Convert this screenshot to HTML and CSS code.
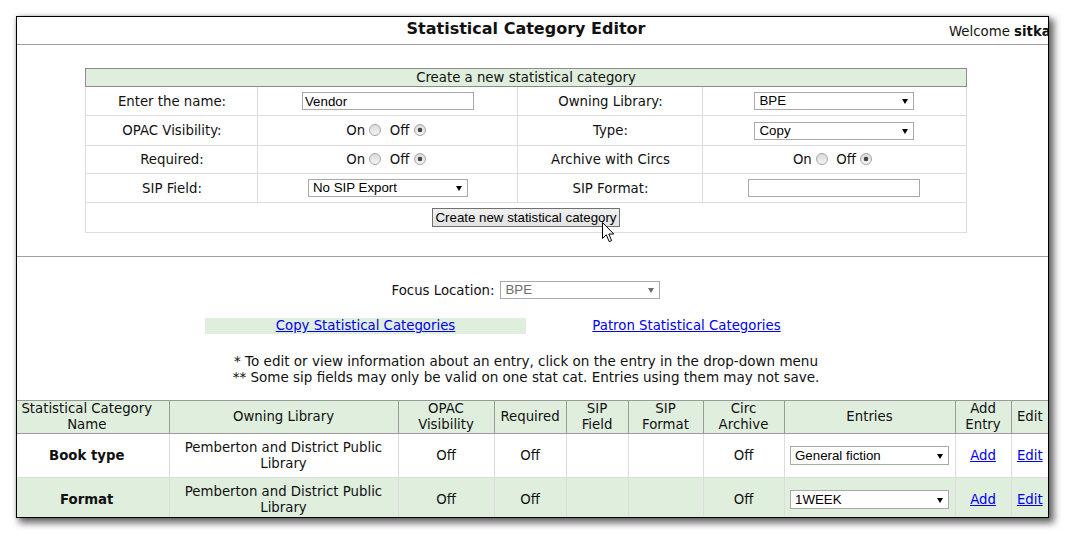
FILE: index.html
```html
<!DOCTYPE html>
<html lang="en">
<head>
    <meta charset="UTF-8">
    <meta name="viewport" content="width=device-width, initial-scale=1.0">
    <title>Statistical Category Editor</title>
    <link rel="stylesheet" href="styles.css">
</head>
<body>
    <div class="window">
        <div class="header">
            <span class="title">Statistical Category Editor</span>
            <span class="welcome">Welcome <b>sitka</b></span>
        </div>

        <div class="create">
            <table class="create-table">
                <colgroup>
                    <col style="width: 172px">
                    <col style="width: 260px">
                    <col style="width: 185px">
                    <col style="width: 263px">
                </colgroup>
                <tr>
                    <th colspan="4">Create a new statistical category</th>
                </tr>
                <tr>
                    <td>Enter the name:</td>
                    <td><input type="text" class="text" value="Vendor"></td>
                    <td>Owning Library:</td>
                    <td><span class="select-wrap"><select class="select"><option>BPE</option></select></span></td>
                </tr>
                <tr class="tall">
                    <td>OPAC Visibility:</td>
                    <td>On <input type="radio" class="radio" name="opac"> Off <input type="radio" class="radio" name="opac" checked></td>
                    <td>Type:</td>
                    <td><span class="select-wrap"><select class="select"><option>Copy</option></select></span></td>
                </tr>
                <tr class="short">
                    <td>Required:</td>
                    <td>On <input type="radio" class="radio" name="req"> Off <input type="radio" class="radio" name="req" checked></td>
                    <td>Archive with Circs</td>
                    <td>On <input type="radio" class="radio" name="arch"> Off <input type="radio" class="radio" name="arch" checked></td>
                </tr>
                <tr>
                    <td>SIP Field:</td>
                    <td><span class="select-wrap"><select class="select"><option>No SIP Export</option></select></span></td>
                    <td>SIP Format:</td>
                    <td><input type="text" class="text" value=""></td>
                </tr>
                <tr>
                    <td colspan="4" class="button-row">
                        <span class="btn-wrap">
                            <button class="btn">Create new statistical category</button>
                            <svg class="cursor" width="13" height="21" viewBox="0 0 13 21">
                                <path d="M0.5 0.5 V16.5 L4.3 12.8 L7.2 19.6 L9.6 18.6 L6.8 12 H11.8 Z" fill="#fff" stroke="#000" stroke-width="1" stroke-linejoin="miter"/>
                            </svg>
                        </span>
                    </td>
                </tr>
            </table>
        </div>

        <div class="browse">
            <div class="focus">
                <span>Focus Location:</span>
                <span class="select-wrap dim"><select class="select" disabled><option>BPE</option></select></span>
            </div>
            <div class="links">
                <div class="link-cell current"><a href="#">Copy Statistical Categories</a></div>
                <div class="link-cell"><a href="#">Patron Statistical Categories</a></div>
            </div>
            <p class="notes">
                * To edit or view information about an entry, click on the entry in the drop-down menu<br>
                ** Some sip fields may only be valid on one stat cat. Entries using them may not save.
            </p>
        </div>

        <table class="cats">
            <colgroup>
                <col style="width: 152px">
                <col style="width: 229px">
                <col style="width: 96px">
                <col style="width: 72px">
                <col style="width: 62px">
                <col style="width: 75px">
                <col style="width: 81px">
                <col style="width: 171px">
                <col style="width: 56px">
                <col style="width: 37px">
            </colgroup>
            <tr>
                <th>Statistical Category Name</th>
                <th>Owning Library</th>
                <th>OPAC Visibility</th>
                <th>Required</th>
                <th>SIP<br>Field</th>
                <th>SIP Format</th>
                <th>Circ Archive</th>
                <th>Entries</th>
                <th>Add Entry</th>
                <th>Edit</th>
            </tr>
            <tr>
                <td class="name">Book type</td>
                <td>Pemberton and District Public Library</td>
                <td>Off</td>
                <td>Off</td>
                <td></td>
                <td></td>
                <td>Off</td>
                <td><span class="select-wrap"><select class="select entry"><option>General fiction</option></select></span></td>
                <td><a href="#">Add</a></td>
                <td><a href="#">Edit</a></td>
            </tr>
            <tr class="alt">
                <td class="name">Format</td>
                <td>Pemberton and District Public Library</td>
                <td>Off</td>
                <td>Off</td>
                <td></td>
                <td></td>
                <td>Off</td>
                <td><span class="select-wrap"><select class="select entry"><option>1WEEK</option></select></span></td>
                <td><a href="#">Add</a></td>
                <td><a href="#">Edit</a></td>
            </tr>
        </table>
    </div>
</body>
</html>
```

FILE: styles.css
```css
body {
    margin: 0;
    padding: 16px 0 14px 16px;
    background: #fff;
    font-family: "DejaVu Sans", Verdana, sans-serif;
    font-size: 13.3px;
    color: #111;
}
.window {
    width: 1031px;
    height: 500px;
    border: 1px solid #000;
    overflow: hidden;
    background: #fff;
    box-shadow: 4px 4px 7px 1px rgba(0,0,0,0.6), 0 0 3px rgba(0,0,0,0.2);
}
.header {
    display: flex;
    align-items: flex-start;
    height: 27px;
    border-bottom: 1px solid #a0a0a0;
    white-space: nowrap;
}
.title {
    flex: 0 0 932px;
    box-sizing: border-box;
    padding-left: 86px;
    padding-top: 2px;
    text-align: center;
    font-size: 16px;
    line-height: 19px;
    font-weight: bold;
}
.welcome {
    flex: none;
    margin-top: 7px;
    line-height: 16px;
}
a {
    color: #0000ee;
}

/* create form */
.create {
    padding: 23px 13px 23px 0;
    border-bottom: 1px solid #a0a0a0;
}
.create-table {
    width: 880px;
    margin: 0 auto;
    border-collapse: collapse;
    table-layout: fixed;
}
.create-table th {
    background: #dfeedd;
    border: 1px solid #8c8c8c;
    font-weight: normal;
    line-height: 16px;
    height: 17px;
    padding: 0;
}
.create-table td {
    border: 1px solid #ddd;
    height: 28px;
    padding: 0;
    text-align: center;
    white-space: nowrap;
}
.create-table tr.tall td,
.create-table td.button-row {
    height: 29px;
}
.create-table tr.short td {
    height: 27px;
}
.text {
    width: 172px;
    height: 18px;
    box-sizing: border-box;
    border: 1px solid #a9a9a9;
    padding: 0 2px;
    font-family: "Liberation Sans", Arial, sans-serif;
    font-size: 13.3px;
    color: #000;
    vertical-align: middle;
}
.select-wrap {
    position: relative;
    display: inline-block;
    vertical-align: middle;
}
.select-wrap::after {
    content: "";
    position: absolute;
    right: 6px;
    top: 50%;
    margin-top: -2px;
    border-left: 3.5px solid transparent;
    border-right: 3.5px solid transparent;
    border-top: 5px solid #000;
    pointer-events: none;
}
.select {
    appearance: none;
    -webkit-appearance: none;
    display: block;
    width: 160px;
    height: 18px;
    box-sizing: border-box;
    border: 1px solid #a9a9a9;
    border-radius: 0;
    background: #fff;
    padding: 0 16px 0 4px;
    font-family: "Liberation Sans", Arial, sans-serif;
    font-size: 13.3px;
    line-height: 16px;
    color: #000;
}
.select.entry {
    width: 159px;
    height: 19px;
}
.dim .select {
    color: #6d6d6d;
    opacity: 1;
}
.dim::after {
    border-top-color: #6d6d6d;
}
.radio {
    appearance: none;
    -webkit-appearance: none;
    width: 12px;
    height: 12px;
    margin: 0 4px 0 0;
    border: 1px solid #a6a6a6;
    border-radius: 50%;
    background: linear-gradient(#dadada, #f4f4f4);
    vertical-align: -1px;
    box-sizing: border-box;
}
.radio:checked {
    background: radial-gradient(circle, #444 0, #444 2px, transparent 2.6px), linear-gradient(#dadada, #f4f4f4);
}
.btn-wrap {
    position: relative;
    display: inline-block;
    vertical-align: middle;
}
.btn {
    display: block;
    height: 19px;
    padding: 0 2px;
    border: 1px solid #707070;
    background: linear-gradient(#f0f0f0, #e2e2e2);
    font-family: "Liberation Sans", Arial, sans-serif;
    font-size: 13.3px;
    color: #000;
}
.cursor {
    position: absolute;
    left: 170px;
    top: 14px;
}

/* browse section */
.browse {
    padding: 24px 13px 15px 0;
    text-align: center;
}
.focus {
    display: flex;
    justify-content: center;
    align-items: center;
    gap: 6px;
    height: 18px;
}
.links {
    display: grid;
    grid-template-columns: 321px 321px;
    justify-content: center;
    margin-top: 19px;
    line-height: 16px;
}
.link-cell.current {
    background: #dfeedd;
}
.notes {
    margin: 19px 0 0;
    font-size: 13.5px;
    line-height: 16px;
}

/* category table */
.cats {
    width: 1031px;
    border-collapse: collapse;
    table-layout: fixed;
}
.cats th {
    background: #dfeedd;
    border: 1px solid #9a9a9a;
    font-weight: normal;
    line-height: 16px;
    height: 32px;
    padding: 0 2px;
}
.cats td {
    border: 1px solid #ddd;
    line-height: 16px;
    height: 43px;
    padding: 0 4px;
    text-align: center;
}
.cats th:first-child, .cats td:first-child {
    border-left: 0;
    padding: 0 14px 0 2px;
}
.cats th:last-child, .cats td:last-child {
    border-right: 0;
}
.cats tr.alt td {
    background: #dfeedd;
}
.cats td.name {
    font-weight: bold;
}
```
